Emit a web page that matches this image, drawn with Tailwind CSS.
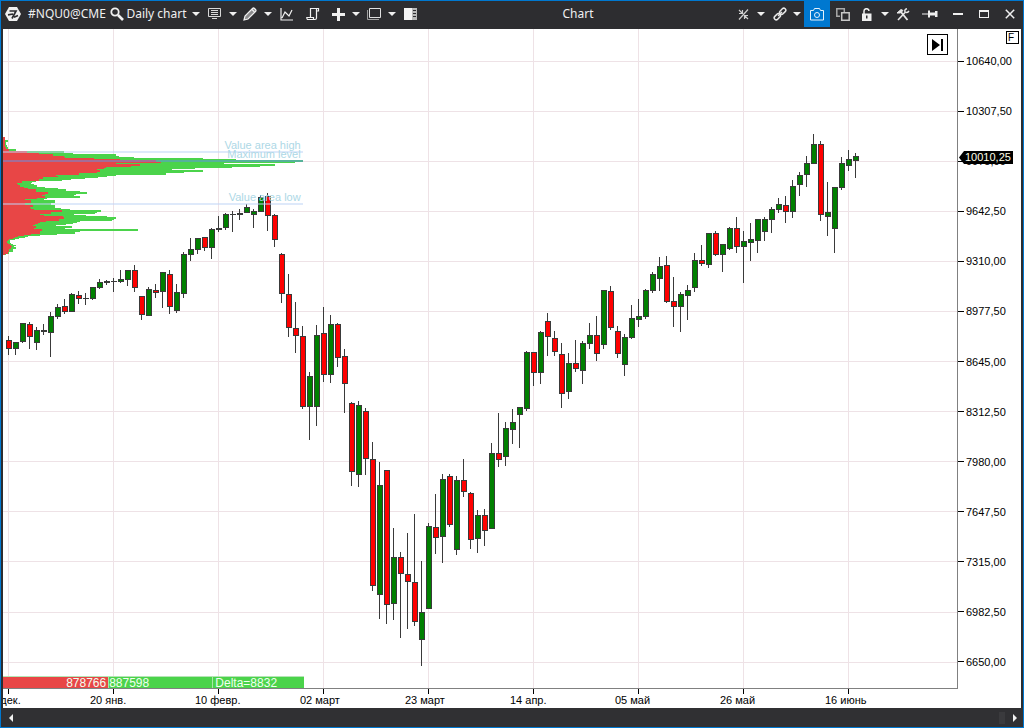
<!DOCTYPE html>
<html lang="ru">
<head>
<meta charset="utf-8">
<title>Chart</title>
<script src="https://cdn.jsdelivr.net/npm/@tailwindcss/browser@4"></script>
</head>
<body class="flex h-screen flex-col overflow-hidden border border-[#0078d0] bg-[#2d2d30] text-[#f0f0f0]" style="font-family:'Liberation Sans',sans-serif">

<header class="flex h-7 shrink-0 items-stretch pb-[2px] pl-[2px] text-xs" style="font-family:'Noto Sans','Open Sans',sans-serif">
  <button aria-label="Menu" class="flex w-5 items-center justify-center">
    <svg width="16" height="14" viewBox="0 0 16 14"><path d="M4 0h8l4 7-4 7H4L0 7z" fill="#f0f0f0"/><path d="M4.500 4h6.500L7 11.500M3 7.800l5-.8M9 10.300l4-1.800" fill="none" stroke="#2d2d30" stroke-width="1.700"/></svg>
  </button>
  <button class="w-[88px] text-center">#NQU0@CME</button>
  <button aria-label="Search" class="flex w-3 items-center justify-center">
    <svg class="shrink-0" width="14" height="14" viewBox="0 0 14 14" fill="none" stroke="#f0f0f0"><circle cx="5" cy="5" r="3.700" stroke-width="1.800"/><path d="M8 8l5 5" stroke-width="2.600"/></svg>
  </button>
  <button class="w-[67px] text-center whitespace-nowrap">Daily chart</button>
  <button aria-label="Choose period" class="flex w-3 items-center justify-center"><svg width="8" height="4" viewBox="0 0 8 4"><path d="M0 0h8L4 4z" fill="#f0f0f0"/></svg></button>
  <button aria-label="Display" class="flex w-[25px] items-center justify-center">
    <svg width="13" height="12" viewBox="0 0 13 12" fill="none" stroke="#d8d8d8"><path d="M.5 .5h12v8H.5zM3 2.500h7M3 4.500h7M3 6.500h7M4 10.500h5"/></svg>
  </button>
  <button aria-label="Display options" class="flex w-[11px] items-center justify-center"><svg width="8" height="4" viewBox="0 0 8 4"><path d="M0 0h8L4 4z" fill="#f0f0f0"/></svg></button>
  <button aria-label="Draw" class="flex w-6 items-center justify-center">
    <svg width="14" height="14" viewBox="0 0 14 14" fill="none" stroke="#f0f0f0" stroke-width="1.200"><path d="M1 13l1-4L9.500 1.500q1-1 2 0l1 1q1 1 0 2L5 12z" fill="#8c8c8e"/><path d="M9 2.500L11.500 5"/></svg>
  </button>
  <button aria-label="Drawing tools" class="flex w-3 items-center justify-center"><svg width="8" height="4" viewBox="0 0 8 4"><path d="M0 0h8L4 4z" fill="#f0f0f0"/></svg></button>
  <button aria-label="Indicators" class="flex w-[26px] items-center justify-center">
    <svg width="14" height="13" viewBox="0 0 14 13" fill="none" stroke="#f0f0f0" stroke-width="1.200"><path d="M1 0v12h12M2 10l3-6 4 4 3-6"/></svg>
  </button>
  <button aria-label="Scripts" class="flex w-[26px] items-center justify-center">
    <svg width="14" height="14" viewBox="0 0 14 14" fill="none" stroke="#f0f0f0" stroke-width="1.200"><path d="M4.500 10V1.500h8V4h-2M10.500 1.500V11q0 1.500-1.500 1.500H1.500q-.7-.5-.7-2h6.700v2"/></svg>
  </button>
  <button aria-label="Add" class="flex w-6 items-center justify-center">
    <svg width="13" height="13" viewBox="0 0 13 13"><path d="M5 0h3v5h5v3H8v5H5V8H0V5h5z" fill="#f0f0f0"/></svg>
  </button>
  <button aria-label="Add options" class="flex w-3 items-center justify-center"><svg width="8" height="4" viewBox="0 0 8 4"><path d="M0 0h8L4 4z" fill="#f0f0f0"/></svg></button>
  <button aria-label="Windows" class="flex w-6 items-center justify-center">
    <svg width="14" height="12" viewBox="0 0 14 12" fill="none"><path d="M2.500 .5h11v9h-11z" stroke="#e0e0e0"/><path d="M.5 2v9.500H12" stroke="#a0a0a0"/></svg>
  </button>
  <button aria-label="Window options" class="flex w-3 items-center justify-center"><svg width="8" height="4" viewBox="0 0 8 4"><path d="M0 0h8L4 4z" fill="#f0f0f0"/></svg></button>
  <button aria-label="Side panel" class="flex w-[25px] items-center justify-center">
    <svg width="13" height="12" viewBox="0 0 13 12"><path d="M0 0h8v12H0z" fill="#f4f4f4"/><path d="M8 0h5v12H8z" fill="#b8b8b8"/><path d="M9 2.500h3M9 5.500h3M9 8.500h3" stroke="#2d2d30"/></svg>
  </button>

  <h1 class="flex flex-1 items-center justify-center">Chart</h1>

  <button aria-label="Crosshair" class="flex w-5 items-center justify-center">
    <svg width="11" height="11" viewBox="0 0 11 11" fill="none" stroke="#d0d0d0" stroke-width="1.200"><path d="M1 10.500L10 .5M1 1l3 3M6.500 6.500l3.500 3.500M1 4.500h3.500V1M6.500 10V6.500H10"/></svg>
  </button>
  <button aria-label="Crosshair options" class="flex w-4 items-center justify-center"><svg width="8" height="4" viewBox="0 0 8 4"><path d="M0 0h8L4 4z" fill="#f0f0f0"/></svg></button>
  <button aria-label="Link" class="flex w-[21px] items-center justify-center">
    <svg width="14" height="14" viewBox="0 0 14 14" fill="none" stroke="#e8e8e8" stroke-width="1.500"><rect x="-3.500" y="-2" width="7" height="4" rx="2" transform="translate(9.700 4.300) rotate(-45)"/><rect x="-3.500" y="-2" width="7" height="4" rx="2" transform="translate(4.300 9.700) rotate(-45)"/><path d="M5 9l4-4"/></svg>
  </button>
  <button aria-label="Link options" class="flex w-[14px] items-center justify-center"><svg width="8" height="4" viewBox="0 0 8 4"><path d="M0 0h8L4 4z" fill="#f0f0f0"/></svg></button>
  <button aria-label="Snapshot" class="-mt-px flex w-[26px] items-center justify-center bg-[#0078d0] pt-px">
    <svg width="14" height="13" viewBox="0 0 14 13" fill="none" stroke="#e8f2fb"><path d="M.5 2.500h3l1-2h5l1 2h3v9.500H.5z"/><circle cx="7" cy="7" r="2.500"/></svg>
  </button>
  <button aria-label="Duplicate" class="flex w-[25px] items-center justify-center">
    <svg width="14" height="13" viewBox="0 0 14 13" fill="none" stroke-width="1.500"><path d="M4 8.300H.8V.8h7.500V4" stroke="#a8a8a8"/><path d="M5.700 4.700h7.500v7.500H5.700z" stroke="#c8c8c8"/></svg>
  </button>
  <button aria-label="Lock" class="flex w-[23px] items-center justify-center">
    <svg width="10" height="13" viewBox="0 0 10 13"><path d="M2 6V3q0-2.300 2.500-2.300T7 3" fill="none" stroke="#f0f0f0" stroke-width="1.500"/><path d="M0 5.500h9.500V13H0z" fill="#f0f0f0"/><path d="M4 7.500h1.500v3H4z" fill="#2d2d30"/></svg>
  </button>
  <button aria-label="Lock options" class="flex w-[14px] items-center justify-center"><svg width="8" height="4" viewBox="0 0 8 4"><path d="M0 0h8L4 4z" fill="#f0f0f0"/></svg></button>
  <button aria-label="Settings" class="flex w-[22px] items-center justify-center">
    <svg width="14" height="13" viewBox="0 0 14 13" fill="none" stroke="#e8e8e8"><path d="M1 5l4-3.500 2 1L4.500 5z" fill="#e8e8e8"/><path d="M5 4l6.500 8" stroke-width="1.800"/><path d="M2 12l7-7.500" stroke-width="1.600"/><path d="M11 .8q-2.800 .7-2 3.200 2 1.500 4-1" stroke-width="1.500"/></svg>
  </button>
  <button aria-label="Pin" class="flex w-[31px] items-center justify-center">
    <svg width="16" height="8" viewBox="0 0 16 8" fill="#f0f0f0"><path d="M0 3.500h7v1H0zM6 .5h2v7H6zM8 2.500h5v3H8zM13 1h2.500v6H13z"/></svg>
  </button>
  <button aria-label="Minimize" class="flex w-[26px] items-center justify-center"><svg width="10" height="2" viewBox="0 0 10 2"><path d="M0 0h10v2H0z" fill="#f0f0f0"/></svg></button>
  <button aria-label="Maximize" class="flex w-[26px] items-center justify-center"><svg width="10" height="8" viewBox="0 0 10 8"><path d="M0 0h10v8H0zM1 2v5h8V2z" fill="#f0f0f0" fill-rule="evenodd"/></svg></button>
  <button aria-label="Close" class="flex w-[26px] items-center justify-center"><svg width="10" height="10" viewBox="0 0 10 10"><path d="M.8 .8l8.400 8.400M9.200 .8L.8 9.200" stroke="#f0f0f0" stroke-width="1.500"/></svg></button>
</header>

<main class="mr-[2px] ml-[2px] flex min-h-0 flex-1 flex-col bg-white text-[11px] text-black">
  <div class="flex min-h-0 flex-1">
    <section aria-label="Price chart" class="relative min-w-0 flex-1 overflow-hidden border-b border-[#808080]">
      <svg class="absolute inset-0 h-full w-full" viewBox="3 29 954 659" preserveAspectRatio="none" shape-rendering="crispEdges">
        <path id="grid" stroke="#eee2e6" fill="none"/>
        <path id="ask" fill="#4bd34b"/>
        <path id="bid" fill="#e84646"/>
        <g id="candles"></g>
        <path d="M3 151h300v2H3zM3 203h300v2H3z" fill="#bed3f5" fill-opacity=".5"/>
        <path d="M3 160h300v2H3z" fill="#6291e7" fill-opacity=".5"/>
      </svg>
      <span class="absolute top-[16.700%] right-[68.800%] leading-3 whitespace-nowrap text-[#add8e6]">Value area high</span>
      <span class="absolute top-[18.100%] right-[68.800%] leading-3 whitespace-nowrap text-[#add8e6]">Maximum level</span>
      <span class="absolute top-[24.600%] right-[68.800%] leading-3 whitespace-nowrap text-[#add8e6]">Value area low</span>
      <div class="absolute bottom-0 left-0 flex h-3 w-[31.500%] border-t border-[#b5e5b5] text-xs leading-3 text-[#f0fff0]">
        <span class="w-[35%] bg-[#e84646] pr-[2px] text-right">878766</span>
        <span class="w-[35%] border-x border-[#a5e9a5] bg-[#4bd34b]">887598</span>
        <span class="flex-1 bg-[#4bd34b] pl-[2px]">Delta=8832</span>
      </div>
      <button aria-label="Go to last bar" class="absolute top-[5px] right-[9px] flex size-[21px] items-center justify-center border border-black bg-white">
        <svg width="12" height="12" viewBox="0 0 12 12"><path d="M0 0l8 6-8 6zM9 0h2v12H9z"/></svg>
      </button>
    </section>

    <aside aria-label="Price scale" class="relative w-16 shrink-0">
      <ol id="prices" class="flex h-full flex-col border-l border-[#808080] pt-[7px] pb-[2px]"></ol>
      <div class="absolute top-[18.500%] left-[2px] flex items-center">
        <svg width="6" height="13" viewBox="0 0 6 13"><path d="M0 6.500L5 0h1v13H5z"/></svg>
        <span class="h-[13px] bg-black pr-[2px] leading-[13px] text-[#ffffe8]">10010,25</span>
      </div>
      <button class="absolute top-[2px] right-[2px] flex size-[13px] items-start border border-black bg-white pl-px text-[10px] leading-[11px]">F</button>
    </aside>
  </div>

  <div class="h-[19px] shrink-0 overflow-hidden pr-16">
    <ol id="dates" class="-ml-[18px] flex"></ol>
  </div>
</main>

<footer class="flex h-[19px] shrink-0 items-center justify-between bg-[#303033] pr-[6px] pl-2">
  <button aria-label="Scroll left"><svg width="4" height="8" viewBox="0 0 4 8"><path d="M4 0v8L0 4z" fill="#f0f0f0"/></svg></button>
  <div class="flex items-center gap-2">
    <span class="h-3 w-[6px] bg-[#3a3a3d]"></span>
    <button aria-label="Scroll right"><svg width="4" height="8" viewBox="0 0 4 8"><path d="M0 0v8l4-4z" fill="#f0f0f0"/></svg></button>
  </div>
</footer>

<script>
// Daily bars: direction (r = down, g = up, d = flat), body top, body bottom, wick top, wick bottom
const bars = `r340,349,336,355 g342,349,342,355 g323,342,323,343 r324,337,322,349 g330,343,327,350 d330,332,324,335 g316,333,312,357 g307,317,304,319 r306,312,299,314 g294,312,293,312
r295,299,291,304 d298,299,293,305 g287,299,287,300 g282,288,279,289 d281,283,280,285 d281,282,278,292 g279,282,270,283 g270,280,270,286 r270,288,265,292 r296,315,296,320
g289,316,287,316 r290,293,284,298 g272,292,272,308 r274,307,270,314 g292,311,284,313 g254,294,252,298 g249,255,238,261 g238,250,238,254 r237,248,237,251 g229,248,228,259
d228,230,216,232 g214,228,213,230 d214,215,211,232 d213,215,209,220 g207,213,204,213 g211,215,209,228 g197,212,195,212 r196,216,193,231 r215,240,214,247 r254,294,253,303
r294,328,274,337 r328,336,302,353 r336,407,326,409 g376,407,372,440 g335,407,325,426 r333,375,307,382 g324,375,315,383 r324,358,323,367 r356,384,349,413 r403,472,402,486
g405,475,401,487 r411,459,408,475 r459,586,442,591 g485,595,462,619 r470,605,470,624 g557,604,528,620 r557,574,552,638 r574,582,533,629 r582,622,514,626 g612,640,561,666
g526,609,523,609 r527,538,494,554 g479,537,474,563 r476,525,474,527 g480,550,476,555 r480,492,459,497 r493,540,492,549 g515,539,510,553 r515,531,509,546 g453,529,443,529
r453,460,413,467 g428,457,422,466 g422,430,409,444 g407,415,407,448 g352,409,351,411 r352,373,352,386 g332,373,331,384 r321,337,313,356 r338,352,331,356 r354,394,343,408
g363,392,353,399 r363,369,340,372 g343,371,341,384 g335,344,323,349 r335,354,316,361 g290,345,290,349 r291,328,286,330 r331,354,326,358 g337,365,334,376 g318,338,305,339
g316,320,299,327 g290,317,289,319 g274,291,272,293 g266,279,257,291 r265,302,256,303 r301,307,277,327 g294,307,292,332 g290,296,285,320 g260,288,253,292 r260,264,245,266
g233,265,233,268 r233,255,231,256 g244,255,244,272 g228,249,227,250 r228,247,217,253 g241,247,231,283 g239,243,223,261 g219,241,219,253 g219,232,217,241 g209,220,207,233
g204,210,198,213 r205,212,196,223 g186,212,180,218 g175,185,172,196 g163,175,156,187 g144,164,134,164 r144,215,141,221 g212,217,182,236 g187,229,187,253 g163,188,157,190
g159,166,150,171 g156,161,153,178`.split(/\s+/);

const fills = { r: '#ff0000', g: '#008000', d: '#3a3a3a' };
document.getElementById('candles').innerHTML = bars.map((bar, i) => {
  const [top, bottom, high, low] = bar.slice(1).split(',').map(Number);
  const x = 6 + 7 * i, h = bottom - top;
  const wick = `<path d="M${x + 2} ${high}h1v${low - high}h-1z" fill="#3a3a3a"/>`;
  const frame = `<path d="M${x} ${top}h6v${h}h-6z" fill="#3a3a3a"/>`;
  const body = h > 2 ? `<path d="M${x + 1} ${top + 1}h4v${h - 2}h-4z" fill="${fills[bar[0]]}"/>` : '';
  return wick + frame + body;
}).join('');

// Volume profile levels: top, bid edge, total edge; each level reaches down to the next one
const levels = [[137,5,5],[140,5,8],[142,5,6],[145,5,7],[147,6,8],[149,9,16],[151,27,64],[153,39,73],[154,53,116],[156,64,119],[157,65,134],[158,94,203],[159,120,236],[160,156,303],
[162,161,295],[163,116,224],[164,140,275],[166,131,260],[167,106,232],[168,104,195],[169,97,172],[170,100,203],[172,97,184],[173,79,166],[175,56,116],[176,58,107],[177,43,98],[178,43,85],[179,39,71],
[180,39,62],[181,22,36],[182,22,32],[183,17,31],[184,18,34],[185,20,37],[187,24,45],[188,28,58],[189,36,66],[191,36,80],[192,48,87],[194,45,76],[195,42,74],[196,45,80],[198,37,47],[199,25,44],
[200,31,55],[203,25,51],[205,33,55],[207,30,55],[208,31,61],[209,34,70],[210,62,101],[212,51,97],[213,51,95],[214,40,74],[215,44,86],[216,63,107],[217,64,116],[219,59,114],[220,59,112],
[221,46,80],[222,40,77],[223,38,73],[224,35,66],[225,33,56],[226,36,72],[228,34,65],[229,42,138],[231,40,80],[232,40,75],[234,31,57],[235,24,40],[236,18,28],[237,15,25],[238,13,19],[239,9,15],
[240,8,10],[241,7,10],[243,8,11],[244,10,13],[245,11,16],[246,12,14],[247,11,16],[249,9,13],[252,8,9],[254,5,6],[255,5,5]];
const profile = col => levels.slice(0, -1).map((lv, i) =>
  `M3 ${lv[0]}H${lv[col]}V${levels[i + 1][0]}H3z`).join('');
document.getElementById('bid').setAttribute('d', profile(1));
document.getElementById('ask').setAttribute('d', profile(2));

const rows = [61,111,161,211,261,311,361,411,461,511,561,612,662];
let grid = rows.map(y => `M3 ${y}.5H957`).join('');
for (let x = 8; x < 900; x += 105) grid += `M${x}.5 29V688`;
document.getElementById('grid').setAttribute('d', grid);

const prices = ['10640,00','10307,50','9975,00','9642,50','9310,00','8977,50','8645,00','8312,50','7980,00','7647,50','7315,00','6982,50','6650,00'];
document.getElementById('prices').innerHTML = prices.map(p =>
  `<li class="flex min-h-0 flex-1 items-center gap-[2px] leading-3"><span class="h-px w-[6px] bg-black"></span>${p}</li>`).join('');

const dates = ['30 дек.','20 янв.','10 февр.','02 март','23 март','14 апр.','05 май','26 май','16 июнь'];
document.getElementById('dates').innerHTML = dates.map(d =>
  `<li class="flex w-[105px] shrink-0 flex-col"><span class="ml-[23px] h-[5px] w-px bg-black"></span><span class="leading-3 whitespace-nowrap">${d}</span></li>`).join('');
</script>
</body>
</html>
